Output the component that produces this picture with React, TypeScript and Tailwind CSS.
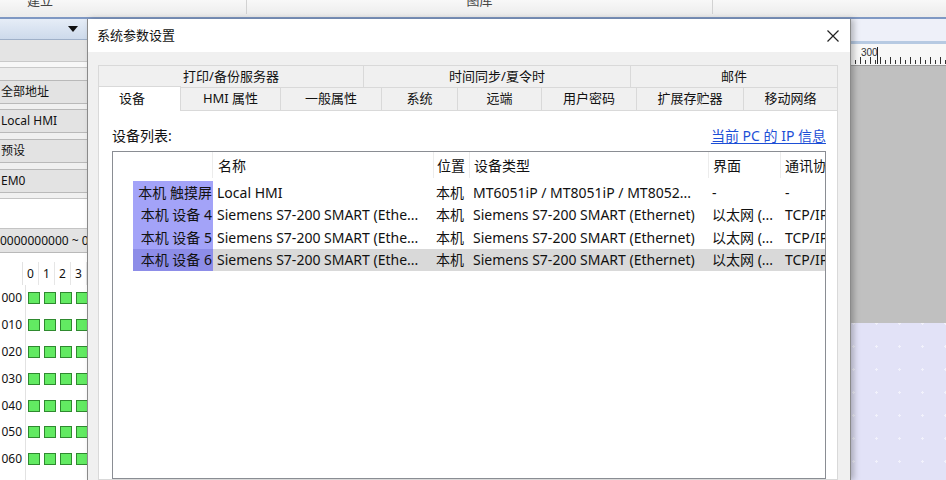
import React from "react";

const tabsTop = [
  { label: "打印/备份服务器", w: "w-[265px]" },
  { label: "时间同步/夏令时", w: "w-[267px]" },
  { label: "邮件", w: "flex-1" },
];

const tabsBottom = [
  { label: "HMI 属性", w: "w-[100px]" },
  { label: "一般属性", w: "w-[101px]" },
  { label: "系统", w: "w-[76px]" },
  { label: "远端", w: "w-[84px]" },
  { label: "用户密码", w: "w-[95px]" },
  { label: "扩展存贮器", w: "w-[107px]" },
  { label: "移动网络", w: "flex-1" },
];

const rows = [
  {
    id: "本机 触摸屏",
    name: "Local HMI",
    loc: "本机",
    type: "MT6051iP / MT8051iP / MT8052...",
    iface: "-",
    proto: "-",
  },
  {
    id: "本机 设备 4",
    name: "Siemens S7-200 SMART (Ethe...",
    loc: "本机",
    type: "Siemens S7-200 SMART (Ethernet)",
    iface: "以太网 (...",
    proto: "TCP/IP",
  },
  {
    id: "本机 设备 5",
    name: "Siemens S7-200 SMART (Ethe...",
    loc: "本机",
    type: "Siemens S7-200 SMART (Ethernet)",
    iface: "以太网 (...",
    proto: "TCP/IP",
  },
  {
    id: "本机 设备 6",
    name: "Siemens S7-200 SMART (Ethe...",
    loc: "本机",
    type: "Siemens S7-200 SMART (Ethernet)",
    iface: "以太网 (...",
    proto: "TCP/IP",
    selected: true,
  },
];

const gridRows = ["000", "010", "020", "030", "040", "050", "060", "070"];

function Ruler() {
  const ticks = [];
  for (let i = 0; i < 19; i++) {
    const x = 4 + i * 5;
    const tall = i % 2 === 1;
    ticks.push(
      <line
        key={i}
        x1={x + 0.5}
        x2={x + 0.5}
        y1={tall ? 13 : 16}
        y2={20}
        stroke="#333"
        strokeWidth="1"
      />
    );
  }
  return (
    <svg width="95" height="22" viewBox="0 0 95 22">
      {ticks}
      <line x1="26.5" x2="26.5" y1="3" y2="20" stroke="#222" strokeWidth="1" />
      <text x="10" y="12" fontSize="10" fill="#333" fontFamily="Liberation Sans, sans-serif">
        300
      </text>
    </svg>
  );
}

function LeftPanel() {
  return (
    <div className="w-[87px] shrink-0 flex flex-col text-[12px] text-[#111] overflow-hidden">
      <div className="h-[21px] shrink-0 bg-gradient-to-b from-[#e6edf7] to-[#cddaeb] border-b border-[#9fb0c8] flex items-center justify-end pr-[9px]">
        <svg width="10" height="6" viewBox="0 0 10 6">
          <path d="M0 0 L10 0 L5 6 Z" fill="#111" />
        </svg>
      </div>
      <div className="h-[22px] shrink-0 bg-[#e4e4e4] border-b border-[#c9c9c9]" />
      <div className="h-[6px] shrink-0 bg-[#f7f7f7] border-b border-[#c9c9c9]" />
      <div className="h-[12px] shrink-0 bg-[#ececec]" />
      <div className="h-[24px] shrink-0 bg-[#e3e3e3] border-y border-[#b9b9b9] flex items-center pl-[1px] whitespace-nowrap">
        全部地址
      </div>
      <div className="h-[5px] shrink-0" />
      <div className="h-[24px] shrink-0 bg-[#e3e3e3] border-y border-[#b9b9b9] flex items-center pl-[1px] whitespace-nowrap">
        Local HMI
      </div>
      <div className="h-[6px] shrink-0" />
      <div className="h-[24px] shrink-0 bg-[#e3e3e3] border-y border-[#b9b9b9] flex items-center pl-[1px] whitespace-nowrap">
        预设
      </div>
      <div className="h-[6px] shrink-0" />
      <div className="h-[24px] shrink-0 bg-[#e3e3e3] border-y border-[#b9b9b9] flex items-center pl-[1px] whitespace-nowrap">
        EM0
      </div>
      <div className="h-[5px] shrink-0" />
      <div className="h-[31px] shrink-0 bg-white border-y border-[#c4c4c4]" />
      <div className="h-[24px] shrink-0 bg-[#e3e3e3] border-b border-[#b9b9b9] flex items-center whitespace-nowrap">
        0000000000 ~ 0
      </div>
      <div className="flex-1 bg-white pt-[9px]">
        <div className="h-[23px] flex items-center">
          <div className="w-[26px] h-full border-r border-[#e2e2e2]" />
          {["0", "1", "2", "3"].map((c) => (
            <div
              key={c}
              className="w-[16px] h-full shrink-0 border-r border-[#e6e6e6] flex items-center justify-center"
            >
              {c}
            </div>
          ))}
        </div>
        {gridRows.map((r) => (
          <div key={r} className="h-[26.8px] flex items-center">
            <div className="w-[26px] h-full shrink-0 flex items-center justify-end pr-[3px] border-r border-[#e2e2e2]">
              {r}
            </div>
            {[0, 1, 2, 3].map((c) => (
              <div key={c} className="w-[16px] h-full shrink-0 flex items-center justify-center">
                <div className="w-[12px] h-[12px] bg-[#62ea62] border border-[#2f8a2f]" />
              </div>
            ))}
          </div>
        ))}
      </div>
    </div>
  );
}

function Dialog() {
  return (
    <div className="w-[764px] shrink-0 flex flex-col bg-[#f0f0f0] border-x border-[#8a8a8a] relative z-10 shadow-[3px_0_6px_rgba(0,0,0,0.25)]">
      <div className="h-[33px] shrink-0 bg-white flex items-center justify-between pl-[9px] pr-[11px] text-[13px] text-[#111]">
        <span>系统参数设置</span>
        <svg width="12" height="12" viewBox="0 0 12 12">
          <path d="M0.5 0.5 L11.5 11.5 M11.5 0.5 L0.5 11.5" stroke="#222" strokeWidth="1.2" />
        </svg>
      </div>
      <div className="flex-1 flex flex-col pl-[10px] pr-[12px] pt-[13px]">
        <div className="h-[22px] shrink-0 flex text-[13px] text-[#111]">
          {tabsTop.map((t) => (
            <div
              key={t.label}
              className={`${t.w} h-full border-t border-l last:border-r border-[#d9d9d9] flex items-center justify-center`}
            >
              {t.label}
            </div>
          ))}
        </div>
        <div className="h-[23px] shrink-0 flex items-end text-[13px] text-[#111] relative z-10">
          <div className="w-[83px] h-[25px] -mb-[1px] bg-white border-x border-t border-[#d9d9d9] flex items-center justify-center pr-[15px] pb-[1px]">
            设备
          </div>
          {tabsBottom.map((t) => (
            <div
              key={t.label}
              className={`${t.w} h-full border-t border-r border-[#d9d9d9] flex items-center justify-center`}
            >
              {t.label}
            </div>
          ))}
        </div>
        <div className="flex-1 bg-white border border-[#d9d9d9] flex flex-col pl-[13px] pr-[11px] pt-[14px]">
          <div className="h-[20px] shrink-0 flex items-center justify-between text-[14px]">
            <span className="text-[#111]">设备列表:</span>
            <span className="text-[#1d4fd6] underline underline-offset-2">当前 PC 的 IP 信息</span>
          </div>
          <div className="mt-[6px] flex-1 border border-[#8a8d93] bg-white overflow-hidden text-[14px] text-[#111]">
            <div className="h-[26px] flex items-center whitespace-nowrap">
              <div className="w-[100px] h-full shrink-0 border-r border-[#ececec]" />
              <div className="w-[221px] h-full shrink-0 border-r border-[#ececec] flex items-center pl-[5px]">名称</div>
              <div className="w-[36px] h-full shrink-0 border-r border-[#ececec] flex items-center pl-[3px]">位置</div>
              <div className="w-[239px] h-full shrink-0 border-r border-[#ececec] flex items-center pl-[4px]">设备类型</div>
              <div className="w-[72px] h-full shrink-0 border-r border-[#ececec] flex items-center pl-[4px]">界面</div>
              <div className="flex-1 h-full overflow-hidden flex items-center pl-[4px]">通讯协议</div>
            </div>
            <div className="pt-[3px]">
              {rows.map((r) => (
                <div key={r.id} className="h-[22.5px] flex whitespace-nowrap">
                  <div className="w-[100px] h-full shrink-0 pl-[20px]">
                    <div
                      className={`h-full flex items-center justify-end pr-[1px] ${
                        r.selected ? "bg-[#8d8de8]" : "bg-[#a3a3f8]"
                      }`}
                    >
                      {r.id}
                    </div>
                  </div>
                  <div className={`flex-1 flex h-full ${r.selected ? "bg-[#d9d9d9]" : ""}`}>
                    <div className="w-[221px] shrink-0 flex items-center pl-[4px] overflow-hidden">{r.name}</div>
                    <div className="w-[36px] shrink-0 flex items-center pl-[2px] overflow-hidden">{r.loc}</div>
                    <div className="w-[239px] shrink-0 flex items-center pl-[3px] overflow-hidden">{r.type}</div>
                    <div className="w-[72px] shrink-0 flex items-center pl-[3px] overflow-hidden">{r.iface}</div>
                    <div className="flex-1 flex items-center pl-[4px] overflow-hidden">{r.proto}</div>
                  </div>
                </div>
              ))}
            </div>
          </div>
        </div>
      </div>
    </div>
  );
}

function RightArea() {
  return (
    <div className="flex-1 flex flex-col overflow-hidden">
      <div className="h-[22px] shrink-0 bg-[#eef0f9]" />
      <div className="h-[3px] shrink-0 bg-[#b7cae2]" />
      <div className="h-[22px] shrink-0 bg-[#f8f8f8] border-b border-[#9a9a9a] overflow-hidden">
        <Ruler />
      </div>
      <div className="h-[257px] shrink-0 bg-[#c0c0c0]" />
      <div className="flex-1 bg-[#e2e2f7] bg-[radial-gradient(circle,#f2f2fc_1px,transparent_1.2px)] bg-[size:23px_23px] bg-[position:14px_12px]" />
    </div>
  );
}

export default function App() {
  return (
    <div className="w-[946px] h-[480px] overflow-hidden bg-[#f0f0f0] flex flex-col font-['Noto_Sans','Noto_Sans_CJK_SC',sans-serif]">
      <div className="h-[17px] shrink-0 flex bg-gradient-to-b from-[#f8f8f8] to-[#ebebeb] overflow-hidden text-[13px] text-[#444]">
        <div className="w-[247px] shrink-0 h-[14px] border-r border-[#d2d2d2] pl-[27px]">
          <div className="leading-[13px] -mt-[6px]">建立</div>
        </div>
        <div className="w-[466px] shrink-0 h-[14px] border-r border-[#d2d2d2] flex justify-center">
          <div className="leading-[13px] -mt-[6px]">图库</div>
        </div>
      </div>
      <div className="h-[2px] shrink-0 bg-[#7f98c3]" />
      <div className="flex-1 flex min-h-0">
        <LeftPanel />
        <Dialog />
        <RightArea />
      </div>
    </div>
  );
}
